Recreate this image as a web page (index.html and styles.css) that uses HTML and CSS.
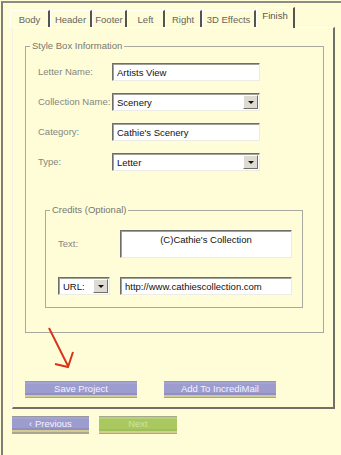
FILE: index.html
```html
<!DOCTYPE html>
<html>
<head>
  <title>Finish - Style Box</title>
  <link rel="stylesheet" href="styles.css">
</head>
<body>
  <div class="window">
    <div class="tabs">
      <div class="tab w-body">Body</div>
      <div class="tab w-header">Header</div>
      <div class="tab w-footer">Footer</div>
      <div class="tab w-left">Left</div>
      <div class="tab w-right">Right</div>
      <div class="tab w-effects">3D Effects</div>
      <div class="tab active w-finish">Finish</div>
    </div>

    <div class="panel">
      <fieldset class="group">
        <legend>Style Box Information</legend>
        <div class="rows">
          <label>Letter Name:</label>
          <div class="field">Artists View</div>

          <label>Collection Name:</label>
          <div class="field select">Scenery<span class="drop"></span></div>

          <label>Category:</label>
          <div class="field">Cathie's Scenery</div>

          <label>Type:</label>
          <div class="field select">Letter<span class="drop"></span></div>
        </div>

        <fieldset class="credits">
          <legend>Credits (Optional)</legend>
          <div class="credit-rows">
            <label>Text:</label>
            <div class="field area">(C)Cathie's Collection</div>

            <div class="field select small">URL:<span class="drop"></span></div>
            <div class="field">http://www.cathiescollection.com</div>
          </div>
        </fieldset>
      </fieldset>

      <svg class="arrow" width="32" height="44" viewBox="0 0 32 44">
        <path d="M2 1 L21 39" stroke="#d8341c" stroke-width="2" fill="none"/>
        <path d="M8 37 L21 40 L26 25" stroke="#d8341c" stroke-width="2" fill="none"/>
      </svg>

      <div class="actions">
        <div class="btn">Save Project</div>
        <div class="btn">Add To IncrediMail</div>
      </div>
    </div>

    <div class="nav">
      <div class="btn nav-btn">&lsaquo; Previous</div>
      <div class="btn nav-btn green">Next</div>
    </div>
  </div>
</body>
</html>
```

FILE: styles.css
```css
body {
  margin: 0;
  background: #fffdd8;
  font-family: "Liberation Sans", Arial, sans-serif;
  font-size: 9.5px;
}
.window {
  margin: 1px 0 0 1px;
  height: 454px;
  border-left: 2px solid #7e7e76;
  border-top: 2px solid #8c8c84;
  box-sizing: border-box;
}

/* tabs */
.tabs {
  display: flex;
  align-items: flex-end;
  height: 17px;
  margin: 7px 0 0 7px;
  position: relative;
  z-index: 1;
}
.tab {
  height: 17px;
  box-sizing: border-box;
  border-left: 1px solid #ffffff;
  border-top: 1px solid #ffffff;
  border-right: 2px solid #55554f;
  color: #66665f;
  text-align: center;
  line-height: 16px;
  padding-top: 1px;
  white-space: nowrap;
}
.tab.active {
  height: 21px;
  margin-bottom: -1px;
  background: #fffdd8;
  color: #55554f;
  line-height: 15px;
  padding-top: 0;
}
.w-body { width: 40px; }
.w-header { width: 42px; }
.w-footer { width: 35px; }
.w-left { width: 38px; }
.w-right { width: 37px; }
.w-effects { width: 54px; }
.w-finish { width: 39px; }

.panel {
  position: relative;
  margin-left: 9px;
  width: 323px;
  height: 382px;
  box-sizing: border-box;
  border-left: 1px solid #f4f2e4;
  border-top: 1px solid #ffffff;
  border-right: 2px solid #707068;
  border-bottom: 2px solid #707068;
}

fieldset {
  margin: 0;
  padding: 0;
  border: 1px solid #a9a9a0;
  min-width: 0;
}
legend {
  margin-left: 4px;
  padding: 0 2px;
  color: #77776f;
  line-height: 12px;
}
.group {
  margin: 12px 0 0 12px;
  width: 299px;
  box-sizing: border-box;
  padding-bottom: 24px;
}
label {
  color: #86867e;
  line-height: 18px;
  white-space: nowrap;
}
.rows {
  display: grid;
  grid-template-columns: 74px 148px;
  row-gap: 12px;
  padding: 11px 0 0 12px;
}
.field {
  position: relative;
  height: 18px;
  box-sizing: border-box;
  background: #ffffff;
  border: 1px solid;
  border-color: #6e6e6a #ecece4 #ecece4 #6e6e6a;
  box-shadow: inset 1px 1px 0 #a0a09a;
  padding: 2px 0 0 4px;
  line-height: 13px;
  color: #111;
  white-space: nowrap;
  overflow: hidden;
}
.drop {
  position: absolute;
  right: 1px;
  top: 1px;
  width: 15px;
  height: 14px;
  box-sizing: border-box;
  background: #dedcd2;
  border: 1px solid;
  border-color: #ffffff #707068 #707068 #ffffff;
}
.drop::after {
  content: "";
  position: absolute;
  left: 4px;
  top: 5px;
  border-left: 3px solid transparent;
  border-right: 3px solid transparent;
  border-top: 3px solid #111;
}

.credits {
  margin: 33px 0 0 19px;
  width: 258px;
  box-sizing: border-box;
  padding-bottom: 12px;
}
.credit-rows {
  display: grid;
  grid-template-columns: 62px 172px;
  row-gap: 19px;
  align-items: center;
  padding: 14px 0 0 12px;
}
.field.area {
  height: 28px;
  text-align: center;
  padding-left: 0;
}
.field.small {
  width: 52px;
}

.arrow {
  position: absolute;
  left: 34px;
  top: 299px;
}

.actions {
  display: flex;
  gap: 27px;
  margin: 48px 0 0 12px;
}
.btn {
  width: 112px;
  height: 17px;
  box-sizing: border-box;
  text-align: center;
  line-height: 15px;
  color: #f2f2ff;
  background: linear-gradient(#9898a4 0 1px, #a4a4d4 1px 3px, #9c9cce 3px 12px, #8f8fc2 12px 14px, #d2ca8e 14px 16px, #a8a690 16px);
}
.nav {
  display: flex;
  gap: 10px;
  margin: 7px 0 0 9px;
}
.nav-btn {
  width: 77px;
  height: 18px;
  line-height: 16px;
}
.nav-btn.green {
  width: 78px;
  color: #cfe2a2;
  background: linear-gradient(#a8a890 0 1px, #b6d276 1px 3px, #a9c960 3px 13px, #9fbf58 13px 15px, #d6cc8c 15px 17px, #a8a690 17px);
}
```
